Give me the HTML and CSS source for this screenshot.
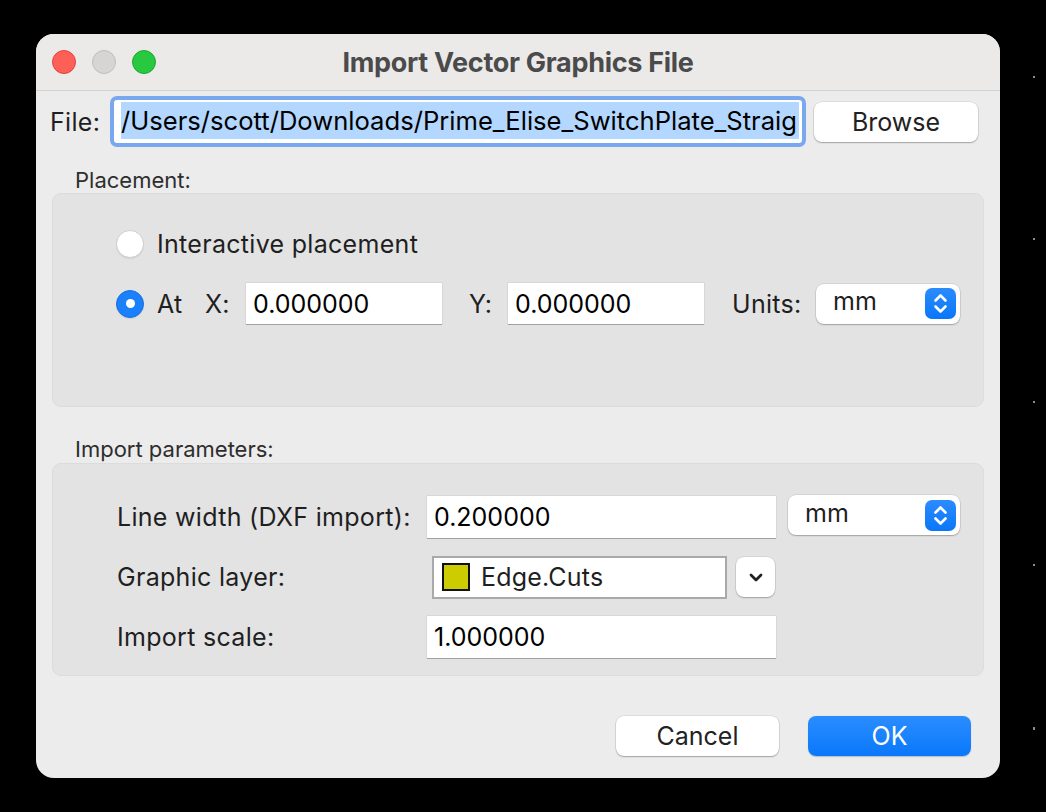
FILE: index.html
```html
<!DOCTYPE html>
<html>
<head>
<meta charset="utf-8">
<link rel="stylesheet" href="styles.css">
</head>
<body>
<div class="window">
  <div class="titlebar">
    <div class="lights">
      <span class="light red"></span>
      <span class="light gray"></span>
      <span class="light green"></span>
    </div>
    <div class="title">Import Vector Graphics File</div>
    <div></div>
  </div>
  <div class="content">
    <div class="file-row">
      <span class="file-label">File:</span>
      <div class="focus-ring">
        <div class="file-field"><span class="selection">/Users/scott/Downloads/Prime_Elise_SwitchPlate_Straig</span></div>
      </div>
      <button class="btn browse">Browse</button>
    </div>

    <div class="section-label">Placement:</div>
    <div class="group group-placement">
      <div class="radio-row">
        <span class="radio"></span>
        <span class="lbl">Interactive placement</span>
      </div>
      <div class="radio-row row-at">
        <span class="radio checked"></span>
        <span class="lbl lbl-at">At</span>
        <span class="lbl lbl-x">X:</span>
        <div class="field fld-coord">0.000000</div>
        <span class="lbl lbl-y">Y:</span>
        <div class="field fld-coord">0.000000</div>
        <span class="lbl lbl-units">Units:</span>
        <div class="select sel-units">
          <span>mm</span>
          <span class="stepper"><svg width="31" height="31" viewBox="0 0 31 31"><path d="M10.5 12.5 L15.5 7.5 L20.5 12.5 M10.5 18.5 L15.5 23.5 L20.5 18.5" fill="none" stroke="#fff" stroke-width="2.6" stroke-linecap="round" stroke-linejoin="round"/></svg></span>
        </div>
      </div>
    </div>

    <div class="section-label">Import parameters:</div>
    <div class="group group-params">
      <span class="lbl">Line width (DXF import):</span>
      <div class="field fld-wide">0.200000</div>
      <div class="select sel-line">
        <span>mm</span>
        <span class="stepper"><svg width="31" height="31" viewBox="0 0 31 31"><path d="M10.5 12.5 L15.5 7.5 L20.5 12.5 M10.5 18.5 L15.5 23.5 L20.5 18.5" fill="none" stroke="#fff" stroke-width="2.6" stroke-linecap="round" stroke-linejoin="round"/></svg></span>
      </div>

      <span class="lbl">Graphic layer:</span>
      <div class="layer-cell">
        <div class="layer-combo">
          <span class="swatch"></span>
          <span>Edge.Cuts</span>
        </div>
        <button class="chev-btn"><svg width="14" height="9" viewBox="0 0 14 9"><path d="M2 2 L7 7 L12 2" fill="none" stroke="#222" stroke-width="2.8" stroke-linecap="round" stroke-linejoin="round"/></svg></button>
      </div>
      <span></span>

      <span class="lbl">Import scale:</span>
      <div class="field fld-wide">1.000000</div>
      <span></span>
    </div>

    <div class="footer">
      <button class="btn cancel">Cancel</button>
      <button class="btn ok">OK</button>
    </div>
  </div>
</div>
<span class="dot d1"></span>
<span class="dot d2"></span>
<span class="dot d3"></span>
<span class="dot d4"></span>
<span class="dot d5"></span>
</body>
</html>
```

FILE: styles.css
```css
html, body {
  margin: 0;
  padding: 0;
}
body {
  background: #000;
  width: 1046px;
  height: 812px;
  position: relative;
  overflow: hidden;
  font-family: "Inter", "Noto Sans", sans-serif;
  color: #1f1f1f;
}
.window {
  position: absolute;
  left: 36px;
  top: 34px;
  width: 964px;
  height: 744px;
  border-radius: 18px;
  background: #ececec;
  overflow: hidden;
  display: flex;
  flex-direction: column;
}
.titlebar {
  height: 56px;
  flex: none;
  display: grid;
  grid-template-columns: 1fr auto 1fr;
  align-items: center;
  background: #ebeae9;
  border-bottom: 1px solid #d2d2d2;
}
.lights {
  display: flex;
  gap: 16px;
  padding-left: 16px;
}
.light {
  width: 24px;
  height: 24px;
  border-radius: 50%;
  box-sizing: border-box;
}
.red { background: #fe5f57; border: 1px solid #e0443e; }
.gray { background: #d6d5d4; border: 1px solid #bfbebd; }
.green { background: #28c840; border: 1px solid #1daa2c; }
.title {
  font-weight: 700;
  font-size: 27px;
  color: #4b4b4b;
  letter-spacing: -0.3px;
}
.content {
  flex: 1;
  padding: 5px 16px 0 14px;
  display: flex;
  flex-direction: column;
}
.file-row {
  display: flex;
  align-items: center;
  height: 51px;
}
.file-label {
  font-size: 25px;
  letter-spacing: 0.3px;
  width: 60px;
}
.focus-ring {
  width: 696px;
  height: 51px;
  box-sizing: border-box;
  border: 4px solid #79a8ee;
  border-radius: 7px;
  background: #fff;
  padding: 2px 3px 2px 4px;
}
.file-field {
  height: 100%;
  overflow: hidden;
  white-space: nowrap;
  background: #fff;
  padding-left: 3px;
}
.selection {
  display: block;
  background: #b3d7ff;
  font-size: 25.6px;
  line-height: 37px;
  color: #000;
  overflow: hidden;
}
.btn {
  font-family: "Inter", "Noto Sans", sans-serif;
  font-size: 25px;
  border: none;
  border-radius: 8px;
  background: #fff;
  color: #222;
  height: 40px;
  box-shadow: 0 0 0 0.5px rgba(0,0,0,0.12), 0 1px 1.5px rgba(0,0,0,0.28);
  padding: 0;
}
.browse {
  width: 164px;
  margin-left: 8px;
}
.section-label {
  font-size: 22px;
  line-height: 24px;
  color: #2e2e2e;
  padding-left: 25px;
  margin-top: 21px;
  margin-bottom: 1px;
}
.group {
  margin-left: 2px;
  width: 932px;
  box-sizing: border-box;
  background: #e3e3e3;
  border: 1px solid #dcdcdc;
  border-radius: 9px;
}
.group-placement {
  height: 214px;
  padding: 36px 0 0 63px;
  display: flex;
  flex-direction: column;
  gap: 25px;
}
.group-placement + .section-label {
  margin-top: 30px;
  margin-bottom: 2px;
}
.radio-row {
  display: flex;
  align-items: center;
  height: 28px;
}
.row-at {
  height: 41px;
}
.radio {
  width: 28px;
  height: 28px;
  flex: none;
  box-sizing: border-box;
  border-radius: 50%;
  background: #fff;
  border: 1px solid #cfcfcf;
  box-shadow: 0 1px 1px rgba(0,0,0,0.08);
  margin-right: 13px;
  position: relative;
}
.radio.checked {
  background: #1a80fb;
  border-color: #1672e0;
}
.radio.checked::after {
  content: "";
  position: absolute;
  left: 8.5px;
  top: 8.5px;
  width: 9px;
  height: 9px;
  border-radius: 50%;
  background: #fff;
}
.lbl {
  font-size: 25px;
  letter-spacing: 0.3px;
  color: #1f1f1f;
}
.lbl-at { width: 48px; }
.lbl-x { width: 41px; }
.lbl-y { width: 39px; margin-left: 27px; }
.lbl-units { width: 84px; margin-left: 28px; }
.field {
  background: #fff;
  height: 41px;
  box-sizing: border-box;
  font-size: 25px;
  line-height: 43px;
  padding-left: 7px;
  color: #000;
  box-shadow: 0 0 0 0.5px rgba(0,0,0,0.1), 0 1px 0 rgba(0,0,0,0.25);
}
.fld-coord { width: 196px; }
.select {
  background: #fff;
  border-radius: 8px;
  height: 40px;
  box-sizing: border-box;
  display: flex;
  align-items: center;
  justify-content: space-between;
  padding: 0 4px 0 17px;
  font-size: 25px;
  color: #1f1f1f;
  box-shadow: 0 0 0 0.5px rgba(0,0,0,0.12), 0 1px 1.5px rgba(0,0,0,0.25);
}
.select > span:first-child {
  margin-top: -5px;
}
.sel-units { width: 144px; }
.stepper {
  width: 31px;
  height: 31px;
  border-radius: 7px;
  background: linear-gradient(#2b8cfd, #0a76f8);
  display: flex;
}
.group-params {
  height: 213px;
  padding: 32px 0 0 64px;
  display: grid;
  grid-template-columns: 298px 349px 172px;
  grid-template-rows: 42px 42px 42px;
  column-gap: 12px;
  row-gap: 18px;
  align-items: center;
}
.group-params .field {
  height: 42px;
}
.fld-wide { width: 349px; }
.sel-line { width: 172px; align-self: start; margin-top: -1px; }
.layer-cell {
  display: flex;
  align-items: center;
  gap: 9px;
  padding-left: 5px;
}
.layer-combo {
  width: 295px;
  height: 43px;
  box-sizing: border-box;
  background: #fff;
  border: 2px solid #a9a9a9;
  display: flex;
  align-items: center;
  padding-left: 8px;
  gap: 11px;
  font-size: 25px;
  letter-spacing: 0.2px;
  color: #1f1f1f;
}
.swatch {
  width: 28px;
  height: 28px;
  box-sizing: border-box;
  background: #cccc00;
  border: 2px solid #111;
}
.chev-btn {
  width: 39px;
  height: 40px;
  border: none;
  border-radius: 8px;
  background: #fff;
  padding: 0;
  display: flex;
  align-items: center;
  justify-content: center;
  box-shadow: 0 0 0 0.5px rgba(0,0,0,0.12), 0 1px 1.5px rgba(0,0,0,0.25);
}
.footer {
  margin-top: auto;
  display: flex;
  justify-content: flex-end;
  gap: 29px;
  padding: 0 13px 22px 0;
}
.cancel, .ok {
  width: 163px;
}
.ok {
  background: linear-gradient(#2a8dff, #0a78fb);
  color: #fff;
  box-shadow: 0 0.5px 1px rgba(0,0,0,0.2);
}
.dot {
  position: absolute;
  left: 1033px;
  width: 2px;
  height: 2px;
  background: #8a8a8a;
}
.d1 { top: 76px; }
.d2 { top: 238px; }
.d3 { top: 401px; }
.d4 { top: 564px; }
.d5 { top: 727px; height: 3px; }
```
